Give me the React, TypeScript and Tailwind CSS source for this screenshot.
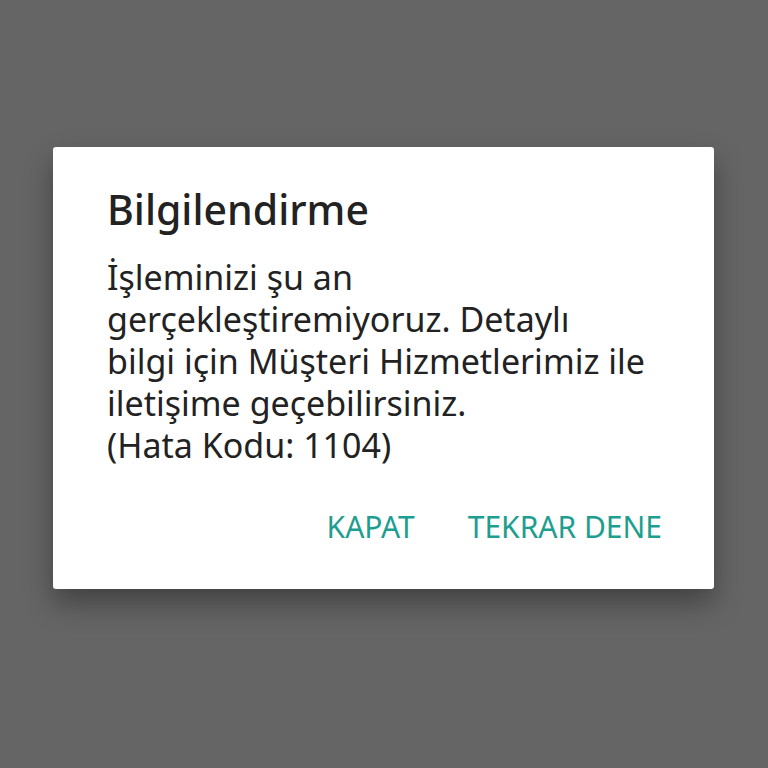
export default function App() {
  return (
    <div
      className="w-full h-[768px] bg-[#656565] pt-[147px] pl-[53px]"
      style={{ fontFamily: '"Noto Sans", "DejaVu Sans", sans-serif' }}
    >
      <div className="w-[661px] h-[442px] bg-white rounded-[3px] shadow-[0_14px_28px_rgba(0,0,0,0.35)] pl-[54px] pr-[40px] pt-[38px] flex flex-col">
        <h1 className="text-[41px] leading-[48px] font-medium text-[#222222] whitespace-nowrap">Bilgilendirme</h1>
        <p className="mt-[23px] text-[34px] leading-[42px] text-[#222222] whitespace-nowrap">
          İşleminizi şu an
          <br />
          gerçekleştiremiyoruz. Detaylı
          <br />
          bilgi için Müşteri Hizmetlerimiz ile
          <br />
          iletişime geçebilirsiniz.
          <br />
          (Hata Kodu: 1104)
        </p>
        <div className="mt-[43px] flex justify-end gap-[53px] pr-[12px] text-[30px] leading-[36px] text-[#1d9e90] whitespace-nowrap">
          <button>KAPAT</button>
          <button>TEKRAR DENE</button>
        </div>
      </div>
    </div>
  );
}
